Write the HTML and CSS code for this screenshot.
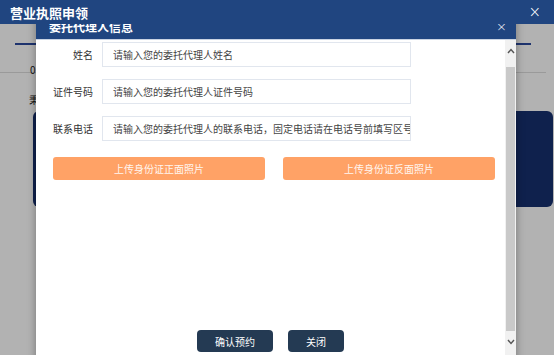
FILE: index.html
```html
<!DOCTYPE html>
<html lang="zh-CN">
<head>
  <meta charset="UTF-8" />
  <meta name="viewport" content="width=device-width, initial-scale=1.0" />
  <title>营业执照申领</title>
  <link rel="stylesheet" href="styles.css">
</head>
<body>
  <header class="topbar">
    <h2>营业执照申领</h2>
    <span class="close">&times;</span>
  </header>

  <main class="page">
    <div class="tabs"></div>
    <p class="step">01</p>
    <p class="tip">秉</p>
    <div class="card"></div>
  </main>

  <div class="mask"></div>

  <div class="dialog">
    <div class="dialog-head">
      <h3>委托代理人信息</h3>
      <span class="close">&times;</span>
    </div>
    <div class="dialog-body">
      <div class="content">
        <div class="row">
          <label for="name">姓名</label>
          <input type="text" id="name" placeholder="请输入您的委托代理人姓名" />
        </div>
        <div class="row">
          <label for="idno">证件号码</label>
          <input type="text" id="idno" placeholder="请输入您的委托代理人证件号码" />
        </div>
        <div class="row">
          <label for="phone">联系电话</label>
          <input type="text" id="phone" placeholder="请输入您的委托代理人的联系电话，固定电话请在电话号前填写区号" />
        </div>
        <div class="uploads">
          <button class="upload">上传身份证正面照片</button>
          <button class="upload">上传身份证反面照片</button>
        </div>
        <div class="footer">
          <button class="btn">确认预约</button>
          <button class="btn small">关闭</button>
        </div>
      </div>
      <div class="scrollbar">
        <div class="sb-btn up">
          <svg width="8" height="6" viewBox="0 0 8 6"><path d="M1 5 L4 1.5 L7 5" fill="none" stroke="#555" stroke-width="1.4"/></svg>
        </div>
        <div class="sb-thumb"></div>
        <div class="sb-btn down">
          <svg width="8" height="6" viewBox="0 0 8 6"><path d="M1 1 L4 4.5 L7 1" fill="none" stroke="#555" stroke-width="1.4"/></svg>
        </div>
      </div>
    </div>
  </div>
</body>
</html>
```

FILE: styles.css
```css
:root {
  --blue: #204580;
  --navy: #243a53;
  --orange: #ffa266;
  --text: #333333;
}

body {
  margin: 0;
  width: 554px;
  height: 355px;
  overflow: hidden;
  position: relative;
  font-family: "Noto Sans CJK SC", "Microsoft YaHei", sans-serif;
  background: #ffffff;
  color: var(--text);
}

.topbar {
  position: relative;
  z-index: 5;
  height: 24px;
  background: var(--blue);
  display: flex;
  align-items: center;
  justify-content: space-between;
  padding: 0 13px 0 10px;
  color: #ffffff;
}

.topbar h2 {
  margin: 0;
  font-size: 13px;
  font-weight: bold;
}

.close {
  font-size: 15px;
  line-height: 1;
  color: #ffffff;
  font-family: "DejaVu Sans", sans-serif;
  font-weight: 300;
}

/* page behind the mask */
.tabs {
  margin: 19px 0 0 15px;
  width: 516px;
  height: 2px;
  background: #2c4a9e;
}

.step {
  margin: 0;
  padding: 17px 0 0 30px;
  height: 28px;
  width: 546px;
  box-sizing: border-box;
  border-bottom: 1px solid #dddddd;
  font-size: 10px;
  color: #222222;
}

.tip {
  margin: 19px 0 0 29px;
  font-size: 10px;
  color: #222222;
}

.card {
  margin: 4px 0 0 33px;
  width: 520px;
  height: 96px;
  border-radius: 6px;
  background: #16306f;
}

.mask {
  position: absolute;
  inset: 0;
  background: rgba(0, 0, 0, 0.3);
  z-index: 2;
}

/* dialog */
.dialog {
  position: absolute;
  z-index: 3;
  left: 36px;
  top: 12px;
  width: 480px;
  background: #ffffff;
  box-shadow: 0 0 8px rgba(0, 0, 0, 0.35);
}

.dialog-head {
  height: 28px;
  background: var(--blue);
  border-bottom: 1px solid #c9d3e3;
  display: flex;
  align-items: center;
  justify-content: space-between;
  padding: 2px 9px 0 13px;
  box-sizing: border-box;
  color: #ffffff;
}

.dialog-head h3 {
  margin: 0;
  font-size: 12px;
  font-weight: bold;
}

.dialog-head .close {
  font-size: 13px;
}

.dialog-body {
  display: flex;
  height: 330px;
}

.content {
  flex: 1;
  display: flex;
  flex-direction: column;
  padding: 2px 10px 18px 17px;
}

.row {
  display: flex;
  align-items: center;
  margin-bottom: 12px;
}

.row label {
  width: 44px;
  text-align: right;
  font-size: 10px;
  color: var(--text);
  margin-right: 9px;
  margin-left: -4px;
}

.row input {
  width: 309px;
  height: 25px;
  box-sizing: border-box;
  border: 1px solid #e1e6ee;
  padding: 0 0 0 10px;
  font-family: inherit;
  font-size: 10px;
  outline: none;
}

.row input::placeholder {
  color: #444444;
}

.uploads {
  display: flex;
  gap: 18px;
  margin-top: 4px;
}

.upload {
  width: 212px;
  height: 23px;
  border: none;
  border-radius: 3px;
  background: var(--orange);
  color: #fff6f0;
  font-family: inherit;
  font-size: 10px;
  cursor: pointer;
}

.footer {
  margin-top: auto;
  display: flex;
  justify-content: center;
  gap: 15px;
  padding-right: 7px;
}

.btn {
  width: 76px;
  height: 22px;
  border: none;
  border-radius: 4px;
  background: var(--navy);
  color: #ffffff;
  font-family: inherit;
  font-size: 10px;
  cursor: pointer;
}

.btn.small {
  width: 56px;
}

.scrollbar {
  width: 11px;
  background: #f1f1f1;
  display: flex;
  flex-direction: column;
}

.sb-btn {
  display: flex;
  justify-content: center;
  box-sizing: border-box;
  padding-top: 8px;
}

.sb-btn.up {
  height: 27px;
}

.sb-btn.down {
  height: 39px;
}

.sb-thumb {
  flex: 1;
  margin: 0 1px;
  background: #c9c9c9;
}
```
